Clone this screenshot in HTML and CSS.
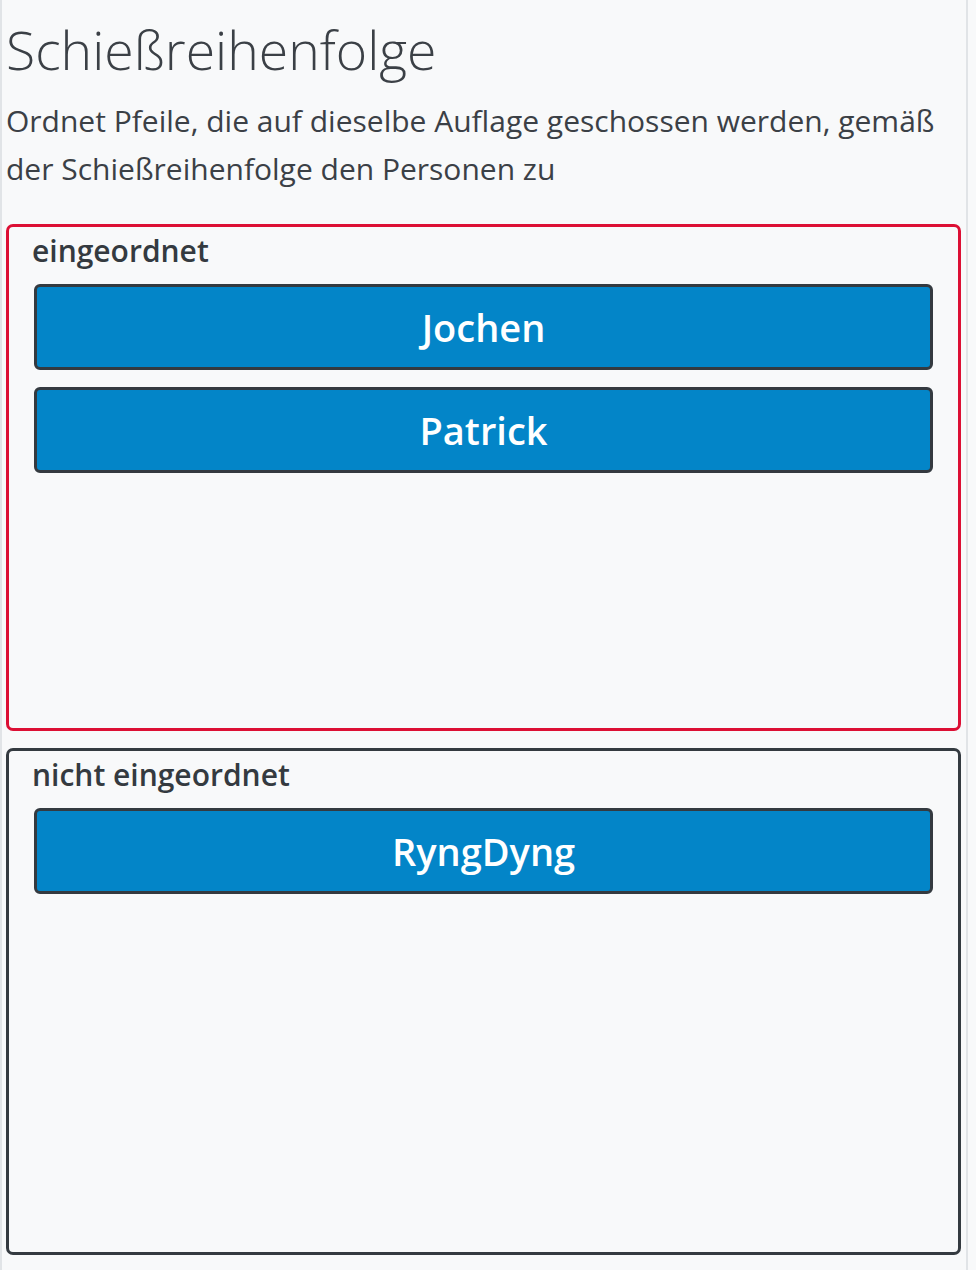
FILE: index.html
```html
<!DOCTYPE html>
<html lang="de">
<head>
  <meta charset="UTF-8" />
  <meta name="viewport" content="width=device-width, initial-scale=1.0"/>
  <title>Schießreihenfolge</title>
  <link rel="stylesheet" href="styles.css">
</head>
<body>
  <div class="seite">
    <h1>Schießreihenfolge</h1>
    <p class="hinweis">Ordnet Pfeile, die auf dieselbe Auflage geschossen werden, gemäß der Schießreihenfolge den Personen zu</p>

    <div class="liste aktiv">
      <div class="titel">eingeordnet</div>
      <button class="person">Jochen</button>
      <button class="person">Patrick</button>
    </div>

    <div class="liste">
      <div class="titel">nicht eingeordnet</div>
      <button class="person">RyngDyng</button>
    </div>
  </div>
</body>
</html>
```

FILE: styles.css
```css
body {
  margin: 0;
  font-family: "Open Sans", "Noto Sans", sans-serif;
  background-color: #f8f9fa;
  color: #343a40;
}
.seite {
  width: 968px;
  min-height: 1270px;
  box-sizing: border-box;
  padding: 14px 5px 0 4px;
  border-left: 2px solid #e1e4e7;
  border-right: 2px solid #e1e4e7;
}
h1 {
  margin: 0;
  font-weight: 300;
  font-size: 53.5px;
  line-height: 72px;
  color: #3b4046;
}
.hinweis {
  margin: 11px 0 31px 0;
  font-size: 30px;
  line-height: 48px;
  color: #3b4046;
}
.liste {
  display: flex;
  flex-direction: column;
  gap: 17px;
  height: 507px;
  box-sizing: border-box;
  padding: 6px 25px 0 25px;
  margin-bottom: 17px;
  border: 3px solid #343a40;
  border-radius: 7px;
}
.liste.aktiv {
  border-color: #dc0f34;
}
.titel {
  font-size: 30px;
  font-weight: 600;
  line-height: 36px;
  margin: 0 0 -2px -2px;
}
.person {
  height: 86px;
  font-family: inherit;
  font-size: 38px;
  font-weight: 600;
  color: #fff;
  background-color: #0385c8;
  border: 3px solid #343a40;
  border-radius: 6px;
}
```
